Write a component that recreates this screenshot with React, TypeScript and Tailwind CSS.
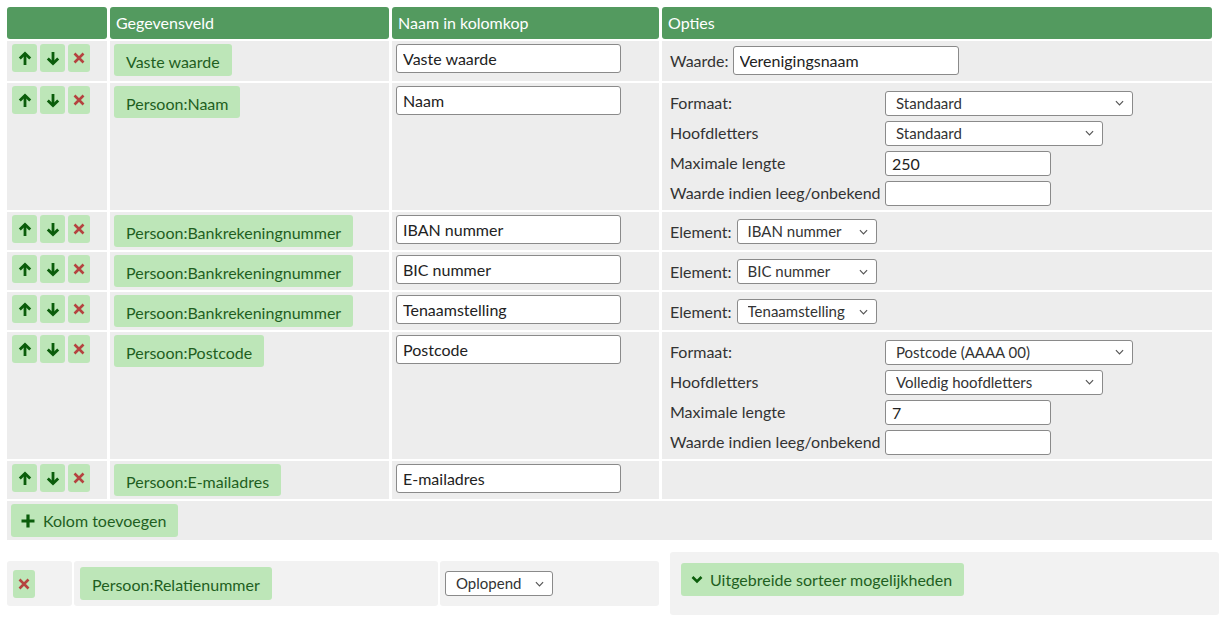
import React from 'react'

type Opt =
  | { kind: 'waarde'; value: string }
  | { kind: 'format'; formaat: string; hoofd: string; max: string }
  | { kind: 'element'; value: string }
  | { kind: 'none' }

const rows: { field: string; name: string; opt: Opt; tall?: boolean }[] = [
  { field: 'Vaste waarde', name: 'Vaste waarde', opt: { kind: 'waarde', value: 'Verenigingsnaam' } },
  { field: 'Persoon:Naam', name: 'Naam', opt: { kind: 'format', formaat: 'Standaard', hoofd: 'Standaard', max: '250' }, tall: true },
  { field: 'Persoon:Bankrekeningnummer', name: 'IBAN nummer', opt: { kind: 'element', value: 'IBAN nummer' } },
  { field: 'Persoon:Bankrekeningnummer', name: 'BIC nummer', opt: { kind: 'element', value: 'BIC nummer' } },
  { field: 'Persoon:Bankrekeningnummer', name: 'Tenaamstelling', opt: { kind: 'element', value: 'Tenaamstelling' } },
  { field: 'Persoon:Postcode', name: 'Postcode', opt: { kind: 'format', formaat: 'Postcode (AAAA 00)', hoofd: 'Volledig hoofdletters', max: '7' }, tall: true },
  { field: 'Persoon:E-mailadres', name: 'E-mailadres', opt: { kind: 'none' } },
]

function ArrowUp() {
  return (
    <svg width="14" height="15" viewBox="0 0 14 15" fill="none" stroke="#0b5d0b" strokeWidth="2.8">
      <path d="M7 14V2.5" />
      <path d="M1.8 7.6L7 2.4l5.2 5.2" />
    </svg>
  )
}

function ArrowDown() {
  return (
    <svg width="14" height="15" viewBox="0 0 14 15" fill="none" stroke="#0b5d0b" strokeWidth="2.8">
      <path d="M7 1v11.5" />
      <path d="M1.8 7.4L7 12.6l5.2-5.2" />
    </svg>
  )
}

function Cross() {
  return (
    <svg width="12" height="12" viewBox="0 0 12 12" fill="none" stroke="#b5423f" strokeWidth="2.6">
      <path d="M1.5 1.5l9 9M10.5 1.5l-9 9" />
    </svg>
  )
}

function Chevron() {
  return (
    <svg width="9" height="6" viewBox="0 0 10 6" fill="none" stroke="#555" strokeWidth="1.3">
      <path d="M1 1l4 4 4-4" />
    </svg>
  )
}

function Btn({ children, w }: { children: React.ReactNode; w: string }) {
  return (
    <span className={`${w} h-[28px] flex items-center justify-center bg-[#bde6b8] rounded-[3px]`}>{children}</span>
  )
}

function Badge({ text }: { text: string }) {
  return (
    <span className="inline-flex items-center h-[32px] px-3 pt-[3px] bg-[#bde6b8] text-[#1f5f1f] rounded-[3px]">
      {text}
    </span>
  )
}

function Select({ value, w, h = 'h-[25px]' }: { value: string; w: string; h?: string }) {
  return (
    <div className={`relative ${w} ${h}`}>
      <select
        defaultValue={value}
        className="appearance-none w-full h-full bg-white border border-[#8a8a8a] rounded-[3px] pl-[10px] text-[15px] text-[#333] outline-none"
      >
        <option>{value}</option>
      </select>
      <span className="absolute right-[9px] top-1/2 -translate-y-1/2 pointer-events-none flex">
        <Chevron />
      </span>
    </div>
  )
}

function Field({ value, w, h }: { value: string; w: string; h: string }) {
  return (
    <input
      defaultValue={value}
      className={`${w} ${h} bg-white border border-[#8a8a8a] rounded-[3px] px-[6px] text-[16px] text-[#222] outline-none`}
    />
  )
}

function Options({ opt }: { opt: Opt }) {
  if (opt.kind === 'waarde') {
    return (
      <div className="flex items-center gap-[4px] pl-[8px] pt-[5px] text-[#333]">
        <span>Waarde:</span>
        <Field value={opt.value} w="w-[226px]" h="h-[29px]" />
      </div>
    )
  }
  if (opt.kind === 'element') {
    return (
      <div className="flex items-center gap-[5px] pl-[8px] pt-[7px] text-[#333]">
        <span>Element:</span>
        <Select value={opt.value} w="w-[140px]" />
      </div>
    )
  }
  if (opt.kind === 'format') {
    return (
      <div className="grid grid-cols-[215px_auto] auto-rows-[30px] items-center pl-[8px] pt-[5px] text-[#333]">
        <span>Formaat:</span>
        <Select value={opt.formaat} w="w-[248px]" />
        <span>Hoofdletters</span>
        <Select value={opt.hoofd} w="w-[218px]" />
        <span>Maximale lengte</span>
        <Field value={opt.max} w="w-[166px]" h="h-[25px]" />
        <span className="whitespace-nowrap">Waarde indien leeg/onbekend</span>
        <Field value="" w="w-[166px]" h="h-[25px]" />
      </div>
    )
  }
  return null
}

export default function App() {
  return (
    <div className="font-['Lato',sans-serif] text-[16px] text-[#333] bg-white min-h-screen">
      <table className="table-fixed border-separate border-spacing-x-[3px] border-spacing-y-[2px] w-[1211px] ml-[4px] mt-[5px]">
        <colgroup>
          <col className="w-[100px]" />
          <col className="w-[279px]" />
          <col className="w-[267px]" />
          <col />
        </colgroup>
        <thead>
          <tr>
            <th className="bg-[#539a5f] rounded-[3px] h-[32px]" />
            <th className="bg-[#539a5f] rounded-[3px] h-[32px] text-left font-normal text-white px-[6px]">Gegevensveld</th>
            <th className="bg-[#539a5f] rounded-[3px] h-[32px] text-left font-normal text-white px-[6px]">Naam in kolomkop</th>
            <th className="bg-[#539a5f] rounded-[3px] h-[32px] text-left font-normal text-white px-[6px]">Opties</th>
          </tr>
        </thead>
        <tbody>
          {rows.map((r, i) => (
            <tr key={i} className={r.tall ? 'h-[127px]' : i === 0 ? 'h-[40px]' : 'h-[38px]'}>
              <td className="bg-[#ededed] align-top p-0">
                <div className="flex gap-[3px] pl-[5px] pt-[3px]">
                  <Btn w="w-[25px]"><ArrowUp /></Btn>
                  <Btn w="w-[25px]"><ArrowDown /></Btn>
                  <Btn w="w-[22px]"><Cross /></Btn>
                </div>
              </td>
              <td className="bg-[#ededed] align-top p-0">
                <div className="pl-[4px] pt-[3px]">
                  <Badge text={r.field} />
                </div>
              </td>
              <td className="bg-[#ededed] align-top p-0">
                <div className="pl-[4px] pt-[3px]">
                  <Field value={r.name} w="w-[225px]" h="h-[29px]" />
                </div>
              </td>
              <td className="bg-[#ededed] align-top p-0">
                <Options opt={r.opt} />
              </td>
            </tr>
          ))}
          <tr className="h-[39px]">
            <td colSpan={4} className="bg-[#ededed] align-top p-0">
              <div className="pl-[4px] pt-[3px]">
                <span className="inline-flex items-center gap-[8px] h-[33px] pl-[10px] pr-[12px] bg-[#bde6b8] text-[#1f5f1f] rounded-[3px]">
                  <svg width="14" height="14" viewBox="0 0 14 14" fill="none" stroke="#0b5d0b" strokeWidth="3.2">
                    <path d="M7 0.5v13M0.5 7h13" />
                  </svg>
                  Kolom toevoegen
                </span>
              </div>
            </td>
          </tr>
        </tbody>
      </table>

      <div className="flex items-start mt-[10px]">
        <table className="table-fixed border-separate border-spacing-[2px] w-[656px] ml-[5px] mt-[7px]">
          <colgroup>
            <col className="w-[65px]" />
            <col className="w-[364px]" />
            <col />
          </colgroup>
          <tbody>
            <tr className="h-[45px]">
              <td className="bg-[#f2f2f2] rounded-[3px] align-top p-0">
                <div className="pl-[6px] pt-[9px]">
                  <Btn w="w-[22px]"><Cross /></Btn>
                </div>
              </td>
              <td className="bg-[#f2f2f2] rounded-[3px] align-top p-0">
                <div className="pl-[6px] pt-[6px]">
                  <span className="inline-flex items-center h-[33px] px-[12px] pt-[3px] bg-[#bde6b8] text-[#1f5f1f] rounded-[3px]">
                    Persoon:Relatienummer
                  </span>
                </div>
              </td>
              <td className="bg-[#f2f2f2] rounded-[3px] align-top p-0">
                <div className="pl-[5px] pt-[10px]">
                  <Select value="Oplopend" w="w-[108px]" />
                </div>
              </td>
            </tr>
          </tbody>
        </table>
        <div className="ml-[9px] w-[549px] h-[63px] bg-[#f2f2f2] rounded-[3px] p-[11px]">
          <span className="inline-flex items-center gap-[7px] h-[33px] pl-[10px] pr-[12px] bg-[#bde6b8] text-[#1f5f1f] rounded-[3px]">
            <svg width="12" height="9" viewBox="0 0 12 9" fill="none" stroke="#0b5d0b" strokeWidth="2.6">
              <path d="M1.5 2l4.5 4.5L10.5 2" />
            </svg>
            Uitgebreide sorteer mogelijkheden
          </span>
        </div>
      </div>
    </div>
  )
}
